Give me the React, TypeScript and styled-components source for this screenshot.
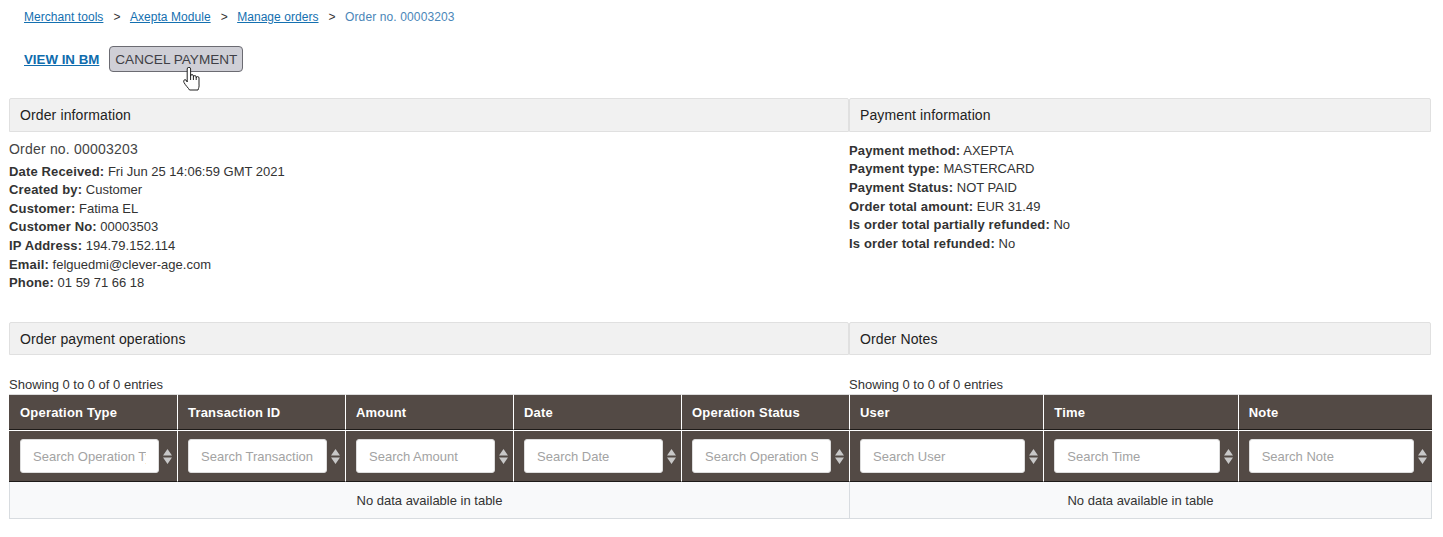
import React from "react";
import styled, { createGlobalStyle } from "styled-components";

const Global = createGlobalStyle`
  html, body { margin: 0; padding: 0; background: #fff; }
  body { font-family: "Liberation Sans", Arial, sans-serif; font-size: 13px; color: #333; }
  * { box-sizing: border-box; }
`;

const Page = styled.div`
  width: 1443px;
  height: 537px;
  overflow: hidden;
  padding: 10px 0 0 9px;
`;

const Breadcrumb = styled.nav`
  display: flex;
  align-items: center;
  height: 14px;
  padding-left: 15px;
  font-size: 12px;
  line-height: 14px;
`;

const Crumb = styled.a`
  color: #1470b0;
  text-decoration: underline;
  letter-spacing: 0.05px;
`;

const Sep = styled.span`
  color: #333;
  margin: 0 9.5px 0 10px;
`;

const Current = styled.span`
  color: #4a86b8;
  letter-spacing: 0.12px;
`;

const Actions = styled.div`
  display: flex;
  align-items: center;
  gap: 10px;
  height: 26px;
  margin-top: 22px;
  padding-left: 15px;
`;

const ViewLink = styled.a`
  color: #0f6cad;
  font-size: 13.3px;
  font-weight: 700;
  text-decoration: underline;
`;

const CancelWrap = styled.div`
  position: relative;
`;

const CancelButton = styled.button`
  display: block;
  width: 134px;
  height: 26px;
  padding: 0;
  border: 1px solid #6b6b72;
  border-radius: 4px;
  background: #cfcfd6;
  color: #3f3f46;
  font-family: inherit;
  font-size: 13.6px;
  text-align: center;
`;

const HandIcon = styled.svg`
  position: absolute;
  left: 74px;
  top: 21px;
  width: 18px;
  height: 24px;
`;

const Panels = styled.div`
  display: grid;
  grid-template-columns: 840px 583px;
  margin-top: 26px;
`;

const SectionHead = styled.h2<{ $narrow?: boolean; $compact?: boolean }>`
  margin: 0 ${(p) => (p.$narrow ? "1px" : "0")} 0 0;
  height: ${(p) => (p.$compact ? "33px" : "34px")};
  padding-left: 10px;
  border: 1px solid #e0e0e0;
  border-radius: 2px 2px 0 0;
  background: #f1f1f1;
  color: #222;
  font-size: 14px;
  font-weight: 400;
  letter-spacing: 0.12px;
  line-height: 32px;
`;

const InfoBlock = styled.div`
  height: 190px;
  padding-top: 9px;
  line-height: 18.6px;
  color: #333;
`;

const OrderTitle = styled.div`
  font-size: 14px;
  letter-spacing: 0.2px;
  line-height: 18px;
  margin: -1px 0 4.7px;
  color: #444;
`;

const InfoRow = styled.div``;

const PaymentRows = styled.div`
  margin-top: 0.9px;
`;

const Label = styled.strong`
  font-weight: 700;
  letter-spacing: 0.15px;
`;

const Showing = styled.div`
  margin-top: 21px;
  height: 18px;
  line-height: 18px;
  color: #333;
`;

const GridTable = styled.div<{ $cols: number }>`
  display: grid;
  grid-template-columns: repeat(${(p) => p.$cols}, minmax(0, 1fr));
`;

const HeadCell = styled.div<{ $first?: boolean }>`
  height: 36px;
  padding-left: ${(p) => (p.$first ? "11px" : "10px")};
  border-top: 1px solid #dcdcdc;
  border-left: ${(p) => (p.$first ? "0" : "1px solid #fff")};
  border-bottom: 1px solid #1d1a18;
  background: #534a45;
  color: #fff;
  font-size: 13px;
  font-weight: 700;
  letter-spacing: 0.2px;
  line-height: 35px;
  white-space: nowrap;
  overflow: hidden;
`;

const FilterCell = styled.div<{ $first?: boolean }>`
  display: flex;
  align-items: center;
  height: 51px;
  margin-top: 1px;
  padding: 0 5px 0 ${(p) => (p.$first ? "11px" : "10px")};
  gap: 4px;
  border-left: ${(p) => (p.$first ? "0" : "1px solid #fff")};
  border-bottom: 1px solid #1d1a18;
  background: #534a45;
`;

const FilterInput = styled.input`
  flex: 1;
  min-width: 0;
  height: 34px;
  padding: 0 12px;
  border: 1px solid #ddd;
  border-radius: 3px;
  background: #fff;
  font-family: inherit;
  font-size: 13px;
  color: #333;
  &::placeholder { color: #a3a3a3; opacity: 1; }
`;

const SortIcon = styled.svg`
  flex: none;
  width: 9px;
  height: 15px;
`;

const EmptyRow = styled.div<{ $right?: boolean }>`
  grid-column: 1 / -1;
  height: 37px;
  border: solid #d8dce0;
  border-width: 0 ${(p) => (p.$right ? "1px" : "0")} 1px 1px;
  background: #f8f9fa;
  color: #333;
  line-height: 38px;
  text-align: center;
`;

const Sort = () => (
  <SortIcon viewBox="0 0 9 15">
    <path d="M4.5 0 9 6.5H0Z M0 8.5H9L4.5 15Z" fill="#c8c8c8" />
  </SortIcon>
);

const leftCols = [
  ["Operation Type", "Search Operation Type"],
  ["Transaction ID", "Search Transaction ID"],
  ["Amount", "Search Amount"],
  ["Date", "Search Date"],
  ["Operation Status", "Search Operation Status"],
];
const rightCols = [
  ["User", "Search User"],
  ["Time", "Search Time"],
  ["Note", "Search Note"],
];

const DataTable = ({ cols, right }: { cols: string[][]; right?: boolean }) => (
  <GridTable $cols={cols.length}>
    {cols.map(([h], i) => (
      <HeadCell key={h} $first={i === 0 && !right}>{h}</HeadCell>
    ))}
    {cols.map(([h, ph], i) => (
      <FilterCell key={h} $first={i === 0 && !right}>
        <FilterInput placeholder={ph} readOnly />
        <Sort />
      </FilterCell>
    ))}
    <EmptyRow $right={right}>No data available in table</EmptyRow>
  </GridTable>
);

export default function App() {
  return (
    <Page>
      <Global />
      <Breadcrumb>
        <Crumb href="#">Merchant tools</Crumb>
        <Sep>&gt;</Sep>
        <Crumb href="#">Axepta Module</Crumb>
        <Sep>&gt;</Sep>
        <Crumb href="#">Manage orders</Crumb>
        <Sep>&gt;</Sep>
        <Current>Order no. 00003203</Current>
      </Breadcrumb>
      <Actions>
        <ViewLink href="#">VIEW IN BM</ViewLink>
        <CancelWrap>
          <CancelButton>CANCEL PAYMENT</CancelButton>
          <HandIcon viewBox="0 0 18 24">
            <path
              d="M4.2 15V2a1.7 1.7 0 0 1 3.4 0V9a1.4 1.4 0 0 1 2.8 0V10a1.4 1.4 0 0 1 2.8 0V11a1.4 1.4 0 0 1 2.8 0V17C16.4 20 15.5 21 15 23H6.5C5.5 21 2.5 18.5 1 15.5C0 13.5 1.5 12 3 13Z M7.6 9V13 M10.4 10V13 M13.2 11V13"
              fill="#fff"
              stroke="#222"
              strokeWidth="1"
              strokeLinejoin="round"
            />
          </HandIcon>
        </CancelWrap>
      </Actions>
      <Panels>
        <SectionHead>Order information</SectionHead>
        <SectionHead $narrow>Payment information</SectionHead>
        <InfoBlock>
          <OrderTitle>Order no. 00003203</OrderTitle>
          <InfoRow><Label>Date Received:</Label> Fri Jun 25 14:06:59 GMT 2021</InfoRow>
          <InfoRow><Label>Created by:</Label> Customer</InfoRow>
          <InfoRow><Label>Customer:</Label> Fatima EL</InfoRow>
          <InfoRow><Label>Customer No:</Label> 00003503</InfoRow>
          <InfoRow><Label>IP Address:</Label> 194.79.152.114</InfoRow>
          <InfoRow><Label>Email:</Label> felguedmi@clever-age.com</InfoRow>
          <InfoRow><Label>Phone:</Label> 01 59 71 66 18</InfoRow>
        </InfoBlock>
        <InfoBlock>
          <PaymentRows>
            <InfoRow><Label>Payment method:</Label> AXEPTA</InfoRow>
            <InfoRow><Label>Payment type:</Label> MASTERCARD</InfoRow>
            <InfoRow><Label>Payment Status:</Label> NOT PAID</InfoRow>
            <InfoRow><Label>Order total amount:</Label> EUR 31.49</InfoRow>
            <InfoRow><Label>Is order total partially refunded:</Label> No</InfoRow>
            <InfoRow><Label>Is order total refunded:</Label> No</InfoRow>
          </PaymentRows>
        </InfoBlock>
        <SectionHead $compact>Order payment operations</SectionHead>
        <SectionHead $compact $narrow>Order Notes</SectionHead>
        <Showing>Showing 0 to 0 of 0 entries</Showing>
        <Showing>Showing 0 to 0 of 0 entries</Showing>
        <DataTable cols={leftCols} />
        <DataTable cols={rightCols} right />
      </Panels>
    </Page>
  );
}
